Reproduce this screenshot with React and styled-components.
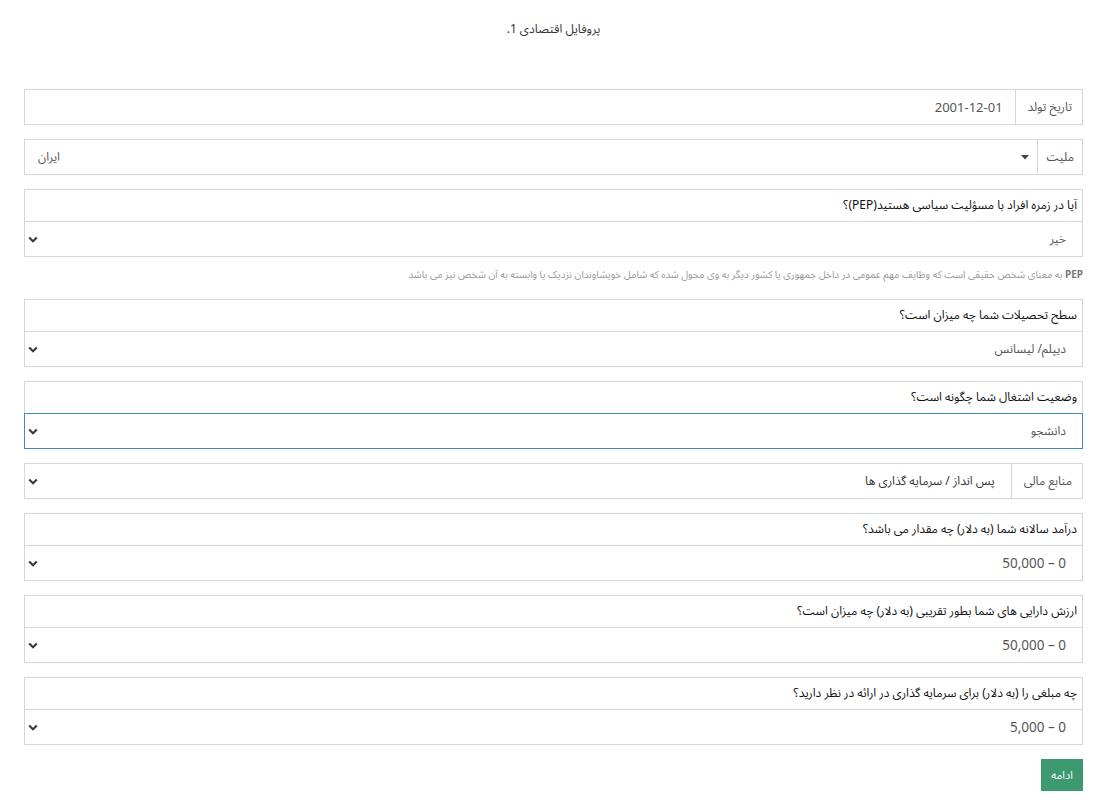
import React from 'react'
import styled, { createGlobalStyle } from 'styled-components'

const GlobalStyle = createGlobalStyle`
  body {
    margin: 0;
    background: #fff;
    font-family: "Noto Sans", "Noto Sans Arabic", "DejaVu Sans", sans-serif;
    font-size: 12px;
    color: #333;
  }
`

const questions = [
  { id: 'edu', label: 'سطح تحصیلات شما چه میزان است؟', value: 'دیپلم/ لیسانس' },
  { id: 'job', label: 'وضعیت اشتغال شما چگونه است؟', value: 'دانشجو', focused: true },
]

const moneyQuestions = [
  { id: 'income', label: 'درآمد سالانه شما (به دلار) چه مقدار می باشد؟', value: '0 – 50,000', numeric: true },
  { id: 'assets', label: 'ارزش دارایی های شما بطور تقریبی (به دلار) چه میزان است؟', value: '0 – 50,000', numeric: true },
  { id: 'invest', label: 'چه مبلغی را (به دلار) برای سرمایه گذاری در ارائه در نظر دارید؟', value: '0 – 5,000', numeric: true },
]

const Chevron = () => (
  <svg width="10" height="7" viewBox="0 0 10 7">
    <polyline points="1.2,1.5 5,5.2 8.8,1.5" fill="none" stroke="#3a3a3a" strokeWidth="2.1" />
  </svg>
)

const Caret = () => (
  <svg width="8" height="5" viewBox="0 0 8 5">
    <polygon points="0,0 8,0 4,4.5" fill="#444" />
  </svg>
)

const QuestionSelect = ({ label, value, focused, numeric }) => (
  <Block>
    <Question>{label}</Question>
    <SelectBox $focused={focused}>
      <SelectValue $numeric={numeric}>{value}</SelectValue>
      <Chevron />
    </SelectBox>
  </Block>
)

const App = () => {
  return (
    <Page dir="rtl">
      <GlobalStyle />
      <Title>پروفایل اقتصادی 1.</Title>

      <Block>
        <InputGroup>
          <Addon>تاریخ تولد</Addon>
          <Control>
            <InputValue>2001-12-01</InputValue>
          </Control>
        </InputGroup>
      </Block>

      <Block>
        <InputGroup>
          <Addon $narrow>ملیت</Addon>
          <Control $select2>
            <Caret />
            <Select2Value>ایران</Select2Value>
          </Control>
        </InputGroup>
      </Block>

      <Block $tight>
        <Question>آیا در زمره افراد با مسؤلیت سیاسی هستید(PEP)؟</Question>
        <SelectBox>
          <SelectValue>خیر</SelectValue>
          <Chevron />
        </SelectBox>
      </Block>
      <Note>
        <b>PEP</b> به معنای شخص حقیقی است که وظایف مهم عمومی در داخل جمهوری یا کشور دیگر به وی محول شده که شامل خویشاوندان نزدیک یا وابسته به آن شخص نیز می باشد
      </Note>

      {questions.map((q) => (
        <QuestionSelect key={q.id} {...q} />
      ))}

      <Block>
        <InputGroup>
          <Addon>منابع مالی</Addon>
          <Control $between>
            <SourceValue>پس انداز / سرمایه گذاری ها</SourceValue>
            <Chevron />
          </Control>
        </InputGroup>
      </Block>

      {moneyQuestions.map((q) => (
        <QuestionSelect key={q.id} {...q} />
      ))}

      <Actions>
        <Button>ادامه</Button>
      </Actions>
    </Page>
  )
}

export default App

const Page = styled.div`
  direction: rtl;
  padding: 0 34px 20px 24px;
`

const Title = styled.div`
  text-align: center;
  font-size: 12px;
  color: #333;
  padding-top: 17px;
  height: 89px;
  box-sizing: border-box;
`

const Block = styled.div`
  margin-bottom: ${(p) => (p.$tight ? '0' : '14px')};
`

const InputGroup = styled.div`
  display: flex;
  height: 36px;
  border: 1px solid #d2d6de;
  box-sizing: border-box;
`

const Addon = styled.div`
  display: flex;
  align-items: center;
  padding: ${(p) => (p.$narrow ? '0 8px 0 9px' : '0 10px 0 12px')};
  border-left: 1px solid #d2d6de;
  color: #555;
  white-space: nowrap;
`

const Control = styled.div`
  flex: 1;
  display: flex;
  align-items: center;
  justify-content: ${(p) => (p.$select2 || p.$between ? 'space-between' : 'flex-start')};
  padding: ${(p) => (p.$select2 ? '0 8px 0 13px' : p.$between ? '0 16px 0 3px' : '0 12px')};
`

const InputValue = styled.span`
  color: #555;
  font-size: 13px;
`

const Select2Value = styled.span`
  color: #555;
`

const SourceValue = styled.span`
  color: #333;
`

const Question = styled.div`
  height: 32px;
  box-sizing: border-box;
  border: 1px solid #d2d6de;
  border-bottom: none;
  padding: 0 5px;
  display: flex;
  align-items: center;
  color: #111;
`

const SelectBox = styled.div`
  height: 36px;
  box-sizing: border-box;
  border: 1px solid ${(p) => (p.$focused ? '#3c8dbc' : '#d2d6de')};
  display: flex;
  align-items: center;
  justify-content: space-between;
  padding: 0 16px 0 3px;
`

const SelectValue = styled.span`
  color: #555;
  font-size: ${(p) => (p.$numeric ? '13.5px' : '12px')};
`

const Note = styled.div`
  font-size: 10px;
  color: #999;
  line-height: 14px;
  padding: 10px 0 18px;
  b {
    color: #777;
  }
`

const Actions = styled.div`
  display: flex;
`

const Button = styled.button`
  background: #3d9970;
  color: #fff;
  border: none;
  height: 32px;
  width: 42px;
  padding: 0;
  font-family: inherit;
  font-size: 11px;
  cursor: pointer;
`
